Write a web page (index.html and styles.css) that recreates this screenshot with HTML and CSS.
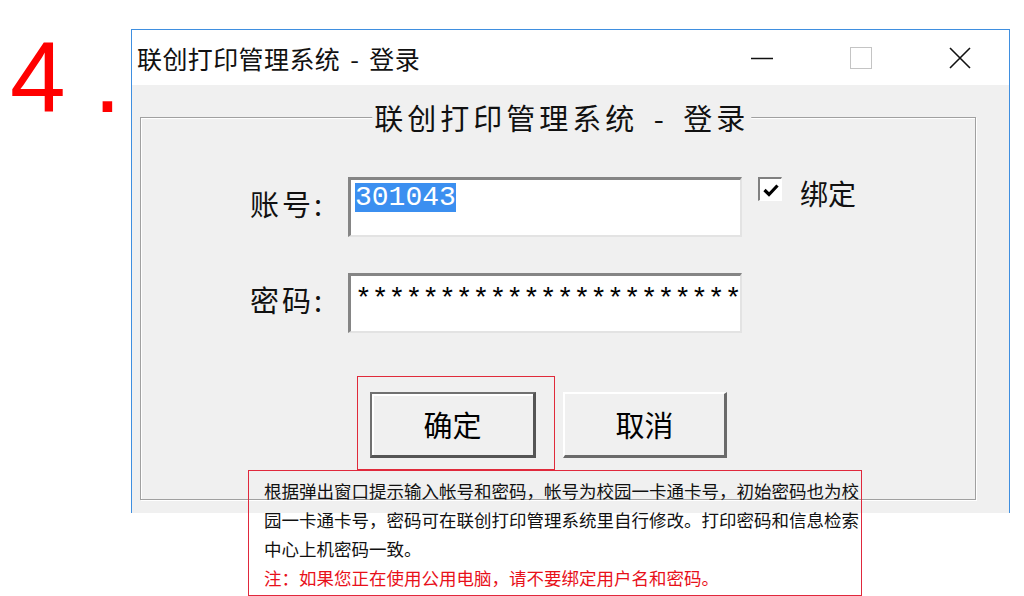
FILE: index.html
```html
<!DOCTYPE html>
<html lang="zh-CN">
<head>
    <meta charset="UTF-8">
    <title>联创打印管理系统 - 登录</title>
    <link rel="stylesheet" href="styles.css">
</head>
<body>
    <div id="page">
        <div class="step">4 .</div>
        <div id="win">
            <div class="titlebar">
                <span class="wintitle">联创打印管理系统 - 登录</span>
                <div class="ctrls">
                    <span class="ctrl"><svg width="22" height="22"><path d="M0 11.5H22" stroke="#111" stroke-width="1.5"/></svg></span>
                    <span class="ctrl"><svg width="22" height="22"><rect x="0.5" y="0.5" width="21" height="21" fill="none" stroke="#c4c4c4"/></svg></span>
                    <span class="ctrl"><svg width="22" height="22"><path d="M1 1L21 21M21 1L1 21" stroke="#111" stroke-width="1.6"/></svg></span>
                </div>
            </div>
            <div class="client">
                <div class="group">
                    <span class="legend">联创打印管理系统 - 登录</span>
                    <div class="row">
                        <span class="lbl">账号:</span>
                        <div class="field"><span class="sel">301043</span></div>
                        <div class="bind">
                            <span class="chk"><svg width="18" height="18"><path d="M2.5 9L7 13.5L15.5 4.5" fill="none" stroke="#000" stroke-width="3.2"/></svg></span>
                            <span>绑定</span>
                        </div>
                    </div>
                    <div class="row">
                        <span class="lbl">密码:</span>
                        <div class="field pwd">***********************</div>
                    </div>
                    <div class="btns">
                        <span class="mark"><button class="btn def">确定</button></span>
                        <button class="btn cancel">取消</button>
                    </div>
                </div>
            </div>
        </div>
        <!-- 说明框 -->
        <div class="note">
            根据弹出窗口提示输入帐号和密码，帐号为校园一卡通卡号，初始密码也为校<br>
            园一卡通卡号，密码可在联创打印管理系统里自行修改。打印密码和信息检索<br>
            中心上机密码一致。
            <div class="warn">注：如果您正在使用公用电脑，请不要绑定用户名和密码。</div>
        </div>
    </div>
</body>
</html>
```

FILE: styles.css
```css
*{padding: 0;margin: 0;box-sizing: border-box;}
body{
    background: #fff;
    width: 1024px;
    height: 596px;
    overflow: hidden;
    font-family: "Noto Sans CJK SC", sans-serif;
    color: #111;
}
#page{
    position: relative;
    display: flex;
    height: 596px;
}
.step{
    width: 131px;
    padding: 27px 0 0 10px;
    font: 100px/100px "Liberation Sans", sans-serif;
    color: #f00;
    white-space: nowrap;
}
#win{
    width: 879px;
    height: 484px;
    margin-top: 29px;
    border: 1px solid #3f8fe0;
    border-bottom: none;
    background: #fff;
    display: flex;
    flex-direction: column;
}
.titlebar{
    height: 55px;
    display: flex;
    align-items: center;
}
.wintitle{
    flex: 1;
    padding-left: 5px;
    font-size: 25px;
    line-height: 30px;
    letter-spacing: 0.4px;
    word-spacing: 4px;
}
.ctrls{
    display: flex;
    height: 100%;
}
.ctrl{
    width: 99px;
    display: flex;
    align-items: center;
    justify-content: center;
}
.client{
    flex: 1;
    background: #f0f0f0;
    padding: 32px 33px 13px 8px;
}
.group{
    position: relative;
    height: 100%;
    border: 1px solid #a0a0a0;
    box-shadow: inset 1px 1px 0 #fff, 1px 1px 0 #fff;
    padding: 59px 0 0 109px;
}
.legend{
    position: absolute;
    top: -18px;
    left: 50%;
    transform: translateX(-49%);
    background: #f0f0f0;
    padding: 0 2px;
    font-size: 29px;
    line-height: 34px;
    letter-spacing: 4px;
    word-spacing: 5px;
    white-space: nowrap;
}
.row{
    display: flex;
    align-items: flex-start;
    height: 60px;
}
.row + .row{margin-top: 36px;}
.lbl{
    width: 98px;
    font-size: 29px;
    line-height: 52px;
    letter-spacing: 3px;
}
.field{
    width: 394px;
    height: 60px;
    background: #fff;
    border-style: solid;
    border-width: 3px 2px 2px 3px;
    border-color: #858585 #e3e3e3 #e3e3e3 #858585;
    padding: 3px 0 0 4px;
    font: 28px/29px "Liberation Mono", monospace;
    color: #000;
    white-space: nowrap;
    overflow: hidden;
}
.field.pwd{padding-top: 9px;}
.sel{
    display: inline-block;
    background: #3b8ff0;
    color: #fff;
}
.bind{
    display: flex;
    align-items: flex-start;
    gap: 18px;
    margin-left: 16px;
    font-size: 28px;
    line-height: 32px;
}
.chk{
    width: 24px;
    height: 24px;
    background: #fff;
    border-style: solid;
    border-width: 2px 1px 1px 2px;
    border-color: #808080 #fff #fff #808080;
    display: flex;
    align-items: center;
    justify-content: center;
}
.btns{
    display: flex;
    gap: 27px;
    margin-top: 59px;
    padding-left: 120px;
}
.btn{
    width: 166px;
    height: 66px;
    font: 29px/1 "Noto Sans CJK SC", sans-serif;
    color: #000;
    background: #f0f0f0;
    border-style: solid;
    border-width: 2px 3px 3px 2px;
    border-color: #fff #6a6a6a #6a6a6a #fff;
}
.btn.def{
    border-color: #707070 #555 #555 #707070;
    box-shadow: inset 2px 2px 0 #fff;
}
.btn.cancel{width: 164px;}
.mark{
    position: relative;
    display: block;
}
.mark::after{
    content: "";
    position: absolute;
    left: -13px;
    top: -16px;
    width: 196px;
    height: 92px;
    border: 1px solid #e02a3a;
}
.note{
    position: absolute;
    left: 248px;
    top: 470px;
    width: 614px;
    height: 126px;
    border: 1px solid #e0283c;
    padding: 5px 0 0 15px;
    font-size: 17.5px;
    line-height: 29px;
    color: #111;
    white-space: nowrap;
}
.warn{color: #e8101a;}
```
